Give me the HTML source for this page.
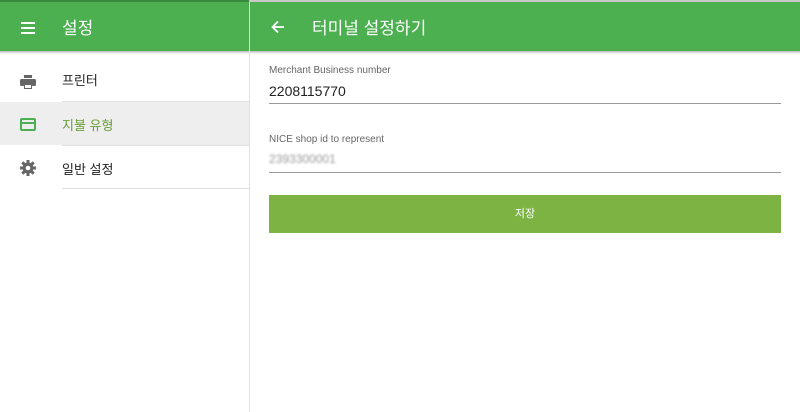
<!DOCTYPE html>
<html><head><meta charset="utf-8"><style>
*{margin:0;padding:0;box-sizing:border-box}
body{width:800px;height:412px;background:#fff;font-family:"Liberation Sans","Noto Sans CJK KR",sans-serif;position:relative;overflow:hidden}
.top{position:absolute;left:0;top:0;width:800px;height:2px;background:#c8c8c8}
.topl{position:absolute;left:0;top:0;width:249px;height:2px;background:#3a8a3d}
.hdr{position:absolute;top:2px;height:49px;background:#4caf50;color:#fff;font-size:17px}
.hdr span{line-height:20px}
.shadow{position:absolute;top:51px;left:0;width:800px;height:3px;background:linear-gradient(#bbb,rgba(255,255,255,0))}
.vline{position:absolute;left:249px;top:2px;width:1px;height:410px;background:#e0e0e0}
.item{position:absolute;left:0;width:249px;height:44px;font-size:13px;color:#222}
.item span{position:absolute;left:62px;top:13px}
.sep{position:absolute;left:62px;width:187px;height:1px;background:#e0e0e0}
.lbl{position:absolute;left:269px;font-size:10px;color:#666}
.val{position:absolute;left:269px;font-size:14px;color:#222}
.ul{position:absolute;left:269px;width:512px;height:1px;background:#999}
</style></head><body>
<div class="top"></div><div class="topl"></div>
<div class="hdr" style="left:0;width:249px;background:#4caf50">
 <svg style="position:absolute;left:21px;top:20px" width="14" height="12"><rect y="0" width="14" height="2" fill="#fff"/><rect y="5" width="14" height="2" fill="#fff"/><rect y="10" width="14" height="2" fill="#fff"/></svg>
 <span style="position:absolute;left:62px;top:17px">설정</span>
</div>
<div class="hdr" style="left:250px;width:550px">
 <svg style="position:absolute;left:21px;top:18px" width="14" height="14" viewBox="0 0 14 14"><path d="M13 7H2M7 1.5L1.5 7 7 12.5" stroke="#fff" stroke-width="1.8" fill="none"/></svg>
 <span style="position:absolute;left:62px;top:17px">터미널 설정하기</span>
</div>
<div class="shadow"></div>
<div class="vline"></div>
<div class="item" style="top:57px"><svg style="position:absolute;left:20px;top:18px" width="16" height="15" viewBox="0 0 16 15"><rect x="4" y="0" width="8" height="3" fill="#666"/><rect x="0" y="4" width="16" height="7" rx="1.5" fill="#666"/><rect x="4" y="9" width="8" height="5" fill="#666"/><rect x="5" y="10" width="6" height="3" fill="#fff"/></svg><span>프린터</span></div>
<div class="sep" style="top:101px"></div>
<div class="item" style="top:102px;background:#eee;height:43px;color:#689f38"><svg style="position:absolute;left:20px;top:16px" width="16" height="13" viewBox="0 0 16 13"><rect x="1" y="1" width="14" height="11" rx="1" fill="none" stroke="#4caf50" stroke-width="2"/><rect x="1" y="4" width="14" height="2" fill="#4caf50"/></svg><span>지불 유형</span></div>
<div class="sep" style="top:145px"></div>
<div class="item" style="top:146px"><svg style="position:absolute;left:20px;top:14px" width="16" height="16" viewBox="0 0 16 16"><g fill="#666"><circle cx="8" cy="8" r="5.5"/><rect x="6.5" y="0" width="3" height="16"/><rect x="0" y="6.5" width="16" height="3"/><rect x="6.5" y="0" width="3" height="16" transform="rotate(45 8 8)"/><rect x="6.5" y="0" width="3" height="16" transform="rotate(-45 8 8)"/></g><circle cx="8" cy="8" r="2.3" fill="#fff"/></svg><span>일반 설정</span></div>
<div class="sep" style="top:188px"></div>
<div class="lbl" style="top:65px">Merchant Business number</div>
<div class="val" style="top:83px">2208115770</div>
<div class="ul" style="top:103px"></div>
<div class="lbl" style="top:134px">NICE shop id to represent</div>
<div class="val" style="top:152px;color:#999;filter:blur(1px);font-size:12px">2393300001</div>
<div class="ul" style="top:172px"></div>
<div style="position:absolute;left:269px;top:195px;width:512px;height:38px;background:#7cb342;color:#fff;font-size:11px;text-align:center;line-height:38px">저장</div>
</body></html>
